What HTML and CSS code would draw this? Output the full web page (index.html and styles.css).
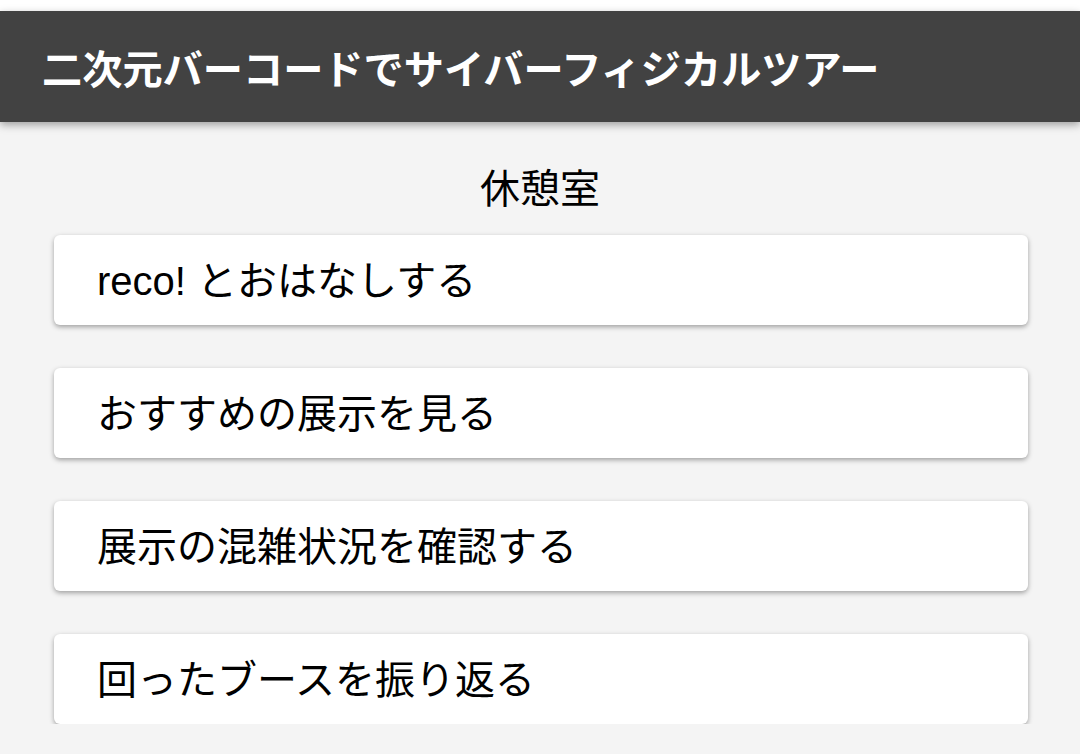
FILE: index.html
```html
<!DOCTYPE html>
<html lang="ja">
<head>
    <meta charset="UTF-8">
    <meta name="viewport" content="width=device-width, initial-scale=1.0">
    <title>二次元バーコードでサイバーフィジカルツアー</title>
    <link rel="stylesheet" href="styles.css">
</head>
<body>
    <div class="top-strip"></div>
    <header class="app-bar">
        <h1>二次元バーコードでサイバーフィジカルツアー</h1>
    </header>

    <main class="content">
        <h2 class="room-title">休憩室</h2>
        <div class="menu">
            <a class="menu-item" href="#">reco! とおはなしする</a>
            <a class="menu-item" href="#">おすすめの展示を見る</a>
            <a class="menu-item" href="#">展示の混雑状況を確認する</a>
            <a class="menu-item" href="#">回ったブースを振り返る</a>
        </div>
    </main>
</body>
</html>
```
FILE: styles.css
```css
body { margin: 0; background: #f4f4f4; font-family: "Liberation Sans", "Noto Sans CJK JP", sans-serif; color: #000; overflow: hidden; }
.top-strip { height: 11px; background: #fff; }
.app-bar { height: 111px; background: #424242; display: flex; align-items: center; padding-left: 42px; box-shadow: 0 3px 8px rgba(0, 0, 0, 0.35); position: relative; }
.app-bar h1 { margin: 0; color: #fff; font-size: 40.2px; font-weight: 700; }
.content { padding-top: 39px; }
.room-title { margin: 0 0 18px; font-size: 40px; font-weight: 400; line-height: 56px; text-align: center; }
.menu { display: flex; flex-direction: column; gap: 43px; padding: 0 52px 0 54px; }
.menu-item { height: 90px; box-sizing: border-box; display: flex; align-items: center; padding: 0 0 4px 43px; background: #fff; border-radius: 6px; box-shadow: 0 2px 5px rgba(0, 0, 0, 0.35); color: #000; text-decoration: none; font-size: 40px; }
```
